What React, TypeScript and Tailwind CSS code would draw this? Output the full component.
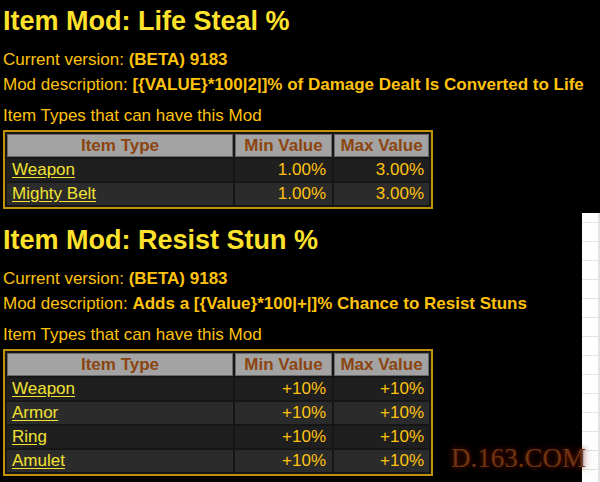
import React from "react";

type Row = { name: string; min: string; max: string };

function ModTable({ rows }: { rows: Row[] }) {
  return (
    <table className="border-2 border-[#c0920a] bg-[#161616] border-separate border-spacing-[2px] w-[430px] text-[17px]">
      <thead>
        <tr className="h-[23px]">
          <th className="bg-[#a3a3a3] border border-[#6a6a6a] text-[#8b4510] font-bold w-[226px] text-center p-0 leading-[20px]">Item Type</th>
          <th className="bg-[#a3a3a3] border border-[#6a6a6a] text-[#8b4510] font-bold w-[97px] text-center p-0 leading-[20px]">Min Value</th>
          <th className="bg-[#a3a3a3] border border-[#6a6a6a] text-[#8b4510] font-bold text-center p-0 leading-[20px]">Max Value</th>
        </tr>
      </thead>
      <tbody>
        {rows.map((r, i) => (
          <tr key={r.name} className="h-[22px]">
            <td className={`${i % 2 === 0 ? "bg-[#1f1f1f]" : "bg-[#2b2b2b]"} pl-[5px] py-0 leading-[22px]`}>
              <span className="text-[#f2e231] underline underline-offset-2 decoration-[#f2e231]">{r.name}</span>
            </td>
            <td className={`${i % 2 === 0 ? "bg-[#1f1f1f]" : "bg-[#2b2b2b]"} text-right pr-[6px] py-0 text-[#ffc20e] leading-[22px]`}>{r.min}</td>
            <td className={`${i % 2 === 0 ? "bg-[#1f1f1f]" : "bg-[#2b2b2b]"} text-right pr-[5px] py-0 text-[#ffc20e] leading-[22px]`}>{r.max}</td>
          </tr>
        ))}
      </tbody>
    </table>
  );
}

function Section({ title, desc, rows }: { title: string; desc: string; rows: Row[] }) {
  return (
    <div className="flex flex-col">
      <h1 className="text-[#ffe22c] font-bold text-[27px] leading-[34px]">{title}</h1>
      <div className="mt-[9px] text-[#ffc20e] text-[17px] leading-[25px]">
        Current version: <span className="font-bold">(BETA) 9183</span>
      </div>
      <div className="text-[#ffc20e] text-[17px] leading-[26px]">
        Mod description: <span className="font-bold">{desc}</span>
      </div>
      <div className="mt-[7px] text-[#ffc20e] text-[17px] leading-[22px]">Item Types that can have this Mod</div>
      <div className="mt-[3px]">
        <ModTable rows={rows} />
      </div>
    </div>
  );
}

export default function App() {
  return (
    <div
      className="relative w-[600px] h-[482px] bg-black overflow-hidden"
      style={{ fontFamily: '"Liberation Sans", Arial, sans-serif' }}
    >
      <div className="flex flex-col gap-[14px] pl-[3px] pt-[4px]">
        <Section
          title="Item Mod: Life Steal %"
          desc="[{VALUE}*100|2|]% of Damage Dealt Is Converted to Life"
          rows={[
            { name: "Weapon", min: "1.00%", max: "3.00%" },
            { name: "Mighty Belt", min: "1.00%", max: "3.00%" },
          ]}
        />
        <Section
          title="Item Mod: Resist Stun %"
          desc="Adds a [{Value}*100|+|]% Chance to Resist Stuns"
          rows={[
            { name: "Weapon", min: "+10%", max: "+10%" },
            { name: "Armor", min: "+10%", max: "+10%" },
            { name: "Ring", min: "+10%", max: "+10%" },
            { name: "Amulet", min: "+10%", max: "+10%" },
          ]}
        />
      </div>
      <div className="absolute left-[582px] top-[213px] w-[18px] h-[269px] bg-white bg-[linear-gradient(#e2e2e2_1px,transparent_1px)] bg-[length:100%_19px] bg-[position:0_9px] border-r-2 border-[#e2e2e2]" />
      <div
        className="absolute left-[451px] top-[438px] text-[27px] text-[#703410]"
        style={{ fontFamily: '"Liberation Serif", "Times New Roman", serif', textShadow: "0 0 5px rgba(140,30,0,0.7), 0 0 12px rgba(110,20,0,0.5)" }}
      >
        D.163.COM
      </div>
    </div>
  );
}
